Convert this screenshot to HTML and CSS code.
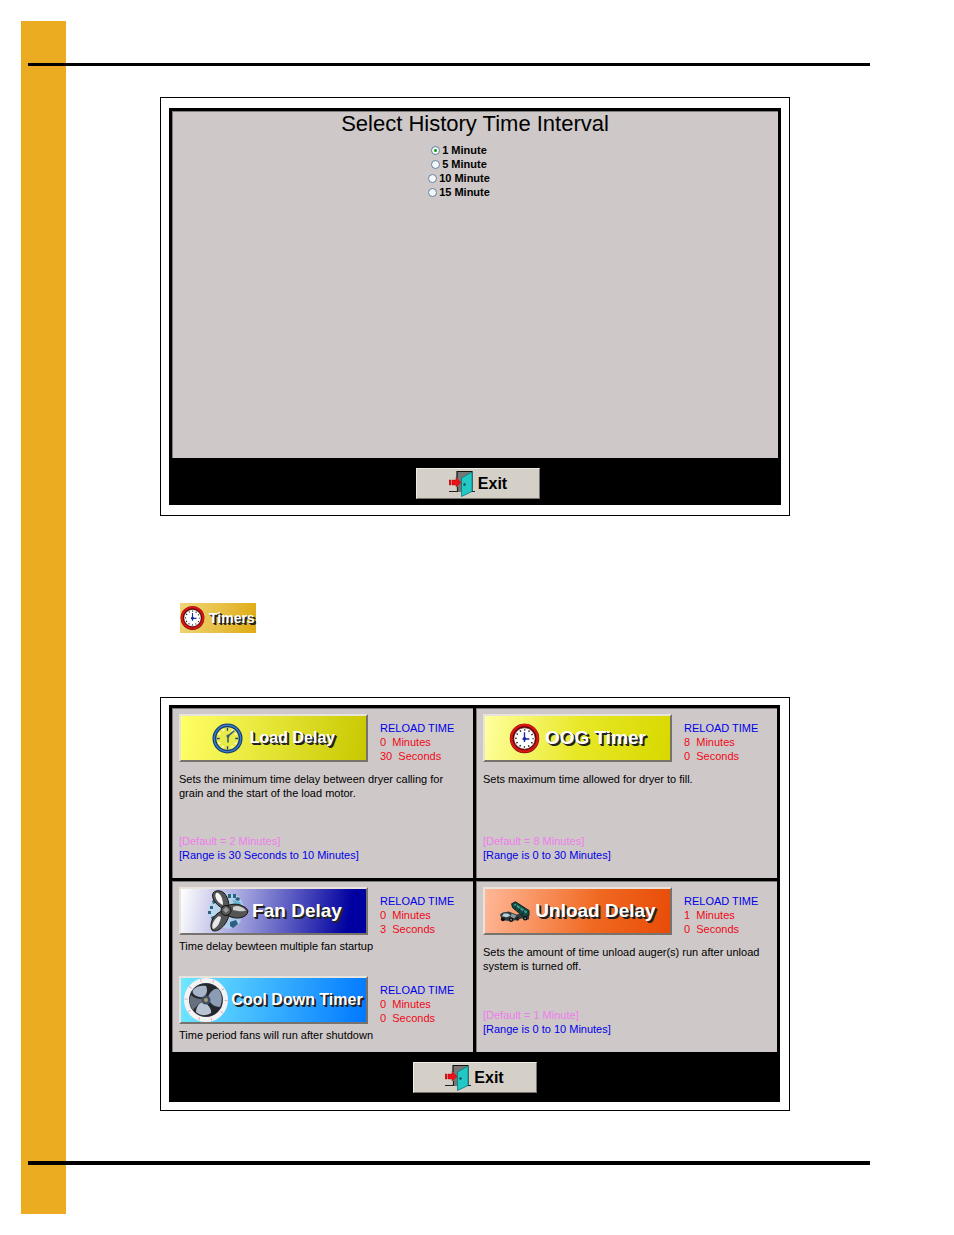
FILE: index.html
```html
<!DOCTYPE html>
<html lang="en">
<head>
<meta charset="utf-8">
<title>Dryer timers</title>
<link rel="stylesheet" href="styles.css">
</head>
<body>
<svg class="defs" aria-hidden="true">
  <symbol id="door" viewBox="0 0 26 27">
    <path d="M8 1.500H23V22H8Z" fill="#777"/>
    <path d="M8 8V1.500H23V22" fill="none" stroke="#111" stroke-width="1.200"/>
    <path d="M0 21.500H8.500V17M22 21.500H26" fill="none" stroke="#222" stroke-width="1.200"/>
    <path d="M12.500 8L23 2V21.500L12.500 26.500Z" fill="#22c8c4" stroke="#087878" stroke-width=".8"/>
    <circle cx="15.500" cy="14.500" r="1.200" fill="#145"/>
    <path d="M0 10H2V15H0ZM3 10H7V7.500L12 12.500L7 17V15H3Z" fill="#ee1018" stroke="#900" stroke-width=".4"/>
  </symbol>
  <symbol id="redclock" viewBox="0 0 32 32">
    <circle cx="16" cy="16" r="15.200" fill="#5c0808"/>
    <circle cx="16" cy="15.700" r="13.600" fill="none" stroke="#d81414" stroke-width="2.600"/>
    <circle cx="16" cy="16" r="11" fill="#fff" stroke="#600" stroke-width=".6"/>
    <circle cx="16" cy="16" r="8.800" fill="none" stroke="#222" stroke-width="1.600" stroke-dasharray="1.400 3.208" stroke-dashoffset=".7"/>
    <path d="M16 9.500V19.500M14 16.500H21" stroke="#1828a8" stroke-width="1.400" fill="none"/>
    <circle cx="16" cy="16.300" r="1.800" fill="#1828a8"/>
  </symbol>
</svg>
<div class="page">
  <hr class="rule">
  <main class="content">
    <section class="figure">
      <form class="screen">
        <fieldset class="panel interval">
          <legend class="title">Select History Time Interval</legend>
          <label class="choice"><input type="radio" name="interval" checked>1 Minute</label>
          <label class="choice"><input type="radio" name="interval">5 Minute</label>
          <label class="choice"><input type="radio" name="interval">10 Minute</label>
          <label class="choice"><input type="radio" name="interval">15 Minute</label>
        </fieldset>
        <div class="actions actions-interval"><button type="button" class="exit"><svg class="door"><use href="#door"/></svg>Exit</button></div>
      </form>
    </section>

    <button type="button" class="chip"><svg class="chip-icon"><use href="#redclock"/></svg><span class="raised">Timers</span></button>

    <section class="figure">
      <div class="screen">
        <div class="timers">
          <article class="panel cell">
            <div class="timer">
              <button type="button" class="key key-load">
                <svg class="icon" viewBox="0 0 32 32">
                  <circle cx="16" cy="16" r="13.500" fill="#e8ec48" stroke="#123a78" stroke-width="4"/>
                  <circle cx="16" cy="16" r="13.600" fill="none" stroke="#3c7cc0" stroke-width="1.500"/>
                  <circle cx="16" cy="16" r="9.800" fill="none" stroke="#fffbd0" stroke-width="2.200" stroke-dasharray="2 3.131" stroke-dashoffset="1"/>
                  <path d="M16 5V8M16 24V27M5 16H8M24 16H27" stroke="#246" stroke-width="1.500"/>
                  <path d="M23 8L16.500 13.500V20" stroke="#345878" stroke-width="1.600" fill="none"/>
                  <circle cx="16.500" cy="13.500" r="1.600" fill="#345878"/>
                </svg><span class="raised">Load Delay</span>
              </button>
              <div class="reload"><h2 class="reload-title">RELOAD TIME</h2><p class="value">0  Minutes</p><p class="value">30  Seconds</p></div>
            </div>
            <p class="note">Sets the minimum time delay between dryer calling for<br>grain and the start of the load motor.</p>
            <div class="limits"><p class="default">[Default = 2 Minutes]</p><p class="range">[Range is 30 Seconds to 10 Minutes]</p></div>
          </article>

          <article class="panel cell">
            <div class="timer">
              <button type="button" class="key key-oog"><svg class="icon"><use href="#redclock"/></svg><span class="raised large">OOG Timer</span></button>
              <div class="reload"><h2 class="reload-title">RELOAD TIME</h2><p class="value">8  Minutes</p><p class="value">0  Seconds</p></div>
            </div>
            <p class="note">Sets maximum time allowed for dryer to fill.</p>
            <div class="limits"><p class="default">[Default = 8 Minutes]</p><p class="range">[Range is 0 to 30 Minutes]</p></div>
          </article>

          <article class="panel cell cell-pair">
            <div class="pair">
              <div class="timer">
                <button type="button" class="key key-fan">
                  <svg class="icon-wide" viewBox="0 0 44 44">
                    <path d="M22 4L34 7L39 17L35 34L25 40L12 38L5 29L4 17L10 10Z" fill="#b4dcf0" opacity=".65"/>
                    <path d="M23 5H26V9H23ZM28 5H31V9H28ZM32 8L35 9L34 12L30 11ZM5 17H8V20H5ZM3 22H6V25H3ZM6 28L9 27L10 31L7 32ZM25 33L31 31L33 35L28 39L25 37ZM7 12L10 10L11 14L8 15Z" fill="#2a6080"/>
                    <path d="M27 11L35 13L37 18L32 17Z" fill="#60b8d0"/>
                    <path d="M19 20C8 15 4 4 11 2C20 0 24 10 24 18Z" fill="#555" stroke="#151515"/>
                    <path d="M16 15C10 11 9 5 12 3.500C16 5 18 10 18 16Z" fill="#f4f4f4"/>
                    <path d="M22 17C31 12 42 18 43 22C42 30 29 31 22 26Z" fill="#555" stroke="#151515"/>
                    <path d="M28 18C33 15 39 19 41 21.500C38 23 31 22 28 21Z" fill="#d0d0d0"/>
                    <path d="M17 22C7 26 4 36 7 41C12 45 22 36 24 26Z" fill="#555" stroke="#151515"/>
                    <path d="M14 27C8 31 6 37 8 40C12 39 15 34 16 28Z" fill="#e8e8e8"/>
                    <circle cx="21" cy="21.500" r="5" fill="#555" stroke="#111"/>
                    <path d="M18 21L21 18L24 21L21 24Z" fill="#999"/>
                  </svg><span class="raised large">Fan Delay</span>
                </button>
                <div class="reload"><h2 class="reload-title">RELOAD TIME</h2><p class="value">0  Minutes</p><p class="value">3  Seconds</p></div>
              </div>
              <p class="note">Time delay bewteen multiple fan startup</p>
            </div>
            <div class="pair">
              <div class="timer">
                <button type="button" class="key key-cool">
                  <svg class="icon-wide" viewBox="0 0 44 44">
                    <circle cx="22" cy="22" r="19.500" fill="#444b55" stroke="#f4f2f4" stroke-width="5"/>
                    <circle cx="22" cy="22" r="20" fill="none" stroke="#d4b4b8" stroke-width="3" stroke-dasharray="1 11.566"/>
                    <circle cx="22" cy="22" r="16.500" fill="#24282e"/>
                    <path d="M20 19C13 20 7 16 9 12C12 8 18 7 22 8C24 12 23 16 20 19Z" fill="#a8b4c8"/>
                    <path d="M24 19C27 12 32 9 35 12C39 17 38 25 36 29C30 29 25 25 24 19Z" fill="#8c9cb4"/>
                    <path d="M19 24C23 25 28 31 27 35C21 39 15 37 12 34C12 29 15 25 19 24Z" fill="#b8c4d4"/>
                    <path d="M7 17C10 20 14 21 18 21L18 24C13 27 11 30 9 32C5 27 5 21 7 17Z" fill="#66707e"/>
                    <circle cx="22" cy="22" r="4.500" fill="#405064"/>
                    <circle cx="22" cy="22" r="2" fill="#a8a070"/>
                  </svg><span class="raised">Cool Down Timer</span>
                </button>
                <div class="reload"><h2 class="reload-title">RELOAD TIME</h2><p class="value">0  Minutes</p><p class="value">0  Seconds</p></div>
              </div>
              <p class="note">Time period fans will run after shutdown</p>
            </div>
          </article>

          <article class="panel cell">
            <div class="timer">
              <button type="button" class="key key-unload">
                <svg class="icon" viewBox="0 0 32 32">
                  <path d="M1 19L4 17L10 16L18 19L28 17L31 20V24L27 25L24 23L17 25L12 26L3 25Z" fill="#303c40"/>
                  <path d="M13 8L17 6L31 15V20L26 22L14 12Z" fill="#174844" stroke="#0c2424"/>
                  <path d="M15 9L17 8L29 16L28 18Z" fill="#38a08c"/>
                  <path d="M18 9L17 13M22 12L20 17M26 14L24 20" stroke="#0c2c2c"/>
                  <path d="M5 18H9L12 20L8 22L3 21Z" fill="#b8d0dc"/>
                  <path d="M13 18L18 20L16 23L12 22Z" fill="#8898a0"/>
                  <circle cx="4" cy="24" r="2" fill="#111"/><circle cx="12.500" cy="24.500" r="2.300" fill="#111"/><circle cx="19" cy="23.500" r="2" fill="#222"/><circle cx="27" cy="23" r="2.300" fill="#111"/>
                  <circle cx="12.500" cy="24.500" r=".8" fill="#bbb"/><circle cx="27" cy="23" r=".8" fill="#bbb"/>
                </svg><span class="raised large">Unload Delay</span>
              </button>
              <div class="reload"><h2 class="reload-title">RELOAD TIME</h2><p class="value">1  Minutes</p><p class="value">0  Seconds</p></div>
            </div>
            <p class="note">Sets the amount of time unload auger(s) run after unload<br>system is turned off.</p>
            <div class="limits"><p class="default">[Default = 1 Minute]</p><p class="range">[Range is 0 to 10 Minutes]</p></div>
          </article>
        </div>
        <div class="actions"><button type="button" class="exit"><svg class="door"><use href="#door"/></svg>Exit</button></div>
      </div>
    </section>
  </main>
  <hr class="rule rule-bottom">
</div>
</body>
</html>
```
FILE: styles.css
```css
* { box-sizing: border-box; }

body {
  margin: 0;
  padding: 21px;
  background: #fff;
  color: #000;
  font: 11px/14px "Liberation Sans", Arial, sans-serif;
}

p, h2 { margin: 0; }

.defs { position: absolute; width: 0; height: 0; }

/* The amber binding strip runs down the left edge of the sheet. */
.page {
  display: flex;
  flex-direction: column;
  min-height: calc(100vh - 42px);
  padding: 42px 63px 49px 7px;
  background: linear-gradient(#ebac22, #ebac22) left / 45px 100% no-repeat;
}

.rule {
  width: 100%;
  height: 3px;
  margin: 0;
  border: 0;
  background: #000;
}
.rule-bottom { height: 4px; margin-top: auto; }

.content {
  display: flex;
  flex-direction: column;
  padding: 31px 80px 48px 132px;
}

.figure {
  padding: 10px 8px;
  border: 1px solid #000;
}
.figure + .chip { margin: 87px 0 64px 20px; }
.chip + .figure { padding: 7px 9px 8px 8px; }

.screen { padding: 3px 3px 0; background: #000; }

.panel {
  min-width: 0;
  margin: 0;
  border: 0;
  background: #cec8c8;
  box-shadow: inset 1px 1px #807c7c;
}

.interval {
  display: flex;
  flex-direction: column;
  align-items: center;
  min-height: 347px;
  padding: 2px 0 0;
}
.title {
  float: left;
  width: 100%;
  padding: 0;
  margin-bottom: 8px;
  font-size: 22px;
  line-height: 22px;
  text-align: center;
}
.choice {
  display: flex;
  align-items: center;
  gap: 2px;
  margin-right: 32px;
  font-weight: bold;
}
.choice input {
  appearance: none;
  width: 9px;
  height: 9px;
  margin: 0;
  border: 1px solid #5f83a5;
  border-radius: 50%;
  background: #f4f6f8;
}
.choice input:checked { background: radial-gradient(#18a018 0 1px, #f4f6f8 2px); }

.actions {
  display: flex;
  justify-content: center;
  padding: 10px 0 9px;
}
.actions-interval { padding: 10px 0 6px 6px; }
.exit {
  display: flex;
  align-items: center;
  justify-content: center;
  gap: 3px;
  width: 124px;
  height: 31px;
  padding: 0;
  border: 1px solid;
  border-color: #f0ece4 #77736c #77736c #f0ece4;
  background: #d4d0c8;
  color: #000;
  font: bold 16px/20px "Liberation Sans", Arial, sans-serif;
}
.door { width: 26px; height: 27px; }

.raised {
  color: #fff;
  font: bold 16px/20px "Liberation Sans", Arial, sans-serif;
  text-shadow: 1px 1px #222, 2px 2px #222;
  white-space: nowrap;
}
.large { font-size: 19px; }

.chip {
  display: flex;
  align-items: center;
  align-self: flex-start;
  gap: 4px;
  height: 30px;
  padding: 0 1px 0 0;
  border: 0;
  background: linear-gradient(100deg, #efd678, #e0ab14);
}
.chip .raised { font-size: 14px; }
.chip-icon { width: 25px; height: 26px; }

.timers {
  display: grid;
  grid-template-columns: 1fr 1fr;
  gap: 3px;
}
.cell {
  display: flex;
  flex-direction: column;
  min-height: 170px;
  padding: 6px 6px 16px 7px;
}
.timer { display: flex; gap: 12px; }
.reload { padding-top: 7px; }
.reload-title {
  color: #0000e8;
  font-size: 11px;
  font-weight: normal;
}
.value { color: #f00818; white-space: pre; }
.note { margin-top: 9px; white-space: nowrap; }
.limits { margin-top: auto; }
.default { color: #ee7cee; }
.range { color: #0000e8; }

.cell-pair { gap: 23px; padding-bottom: 10px; }
.pair .note { margin-top: 3px; }

.key {
  display: flex;
  align-items: center;
  justify-content: center;
  gap: 5px;
  width: 189px;
  height: 48px;
  padding: 0;
  border: 2px solid;
  border-color: #e8e4dc #77736c #77736c #e8e4dc;
}
.pair .key { gap: 3px; }
.key-load { background: linear-gradient(100deg, #ffff68, #c8c800); }
.key-load { gap: 7px; }
.key-oog { background: linear-gradient(100deg, #ffffa0, #e8e828 50%, #d8d800); }
.key-fan { background: linear-gradient(100deg, #fff, #8080d0 45%, #0000a0 90%); }
.key-cool { background: linear-gradient(100deg, #70e8ff, #0078ff); }
.key-unload { background: linear-gradient(100deg, #ffb898, #f06820 60%, #e84c08); }

.icon { flex: none; width: 31px; height: 31px; }
.icon-wide { flex: none; width: 44px; height: 44px; }
```
